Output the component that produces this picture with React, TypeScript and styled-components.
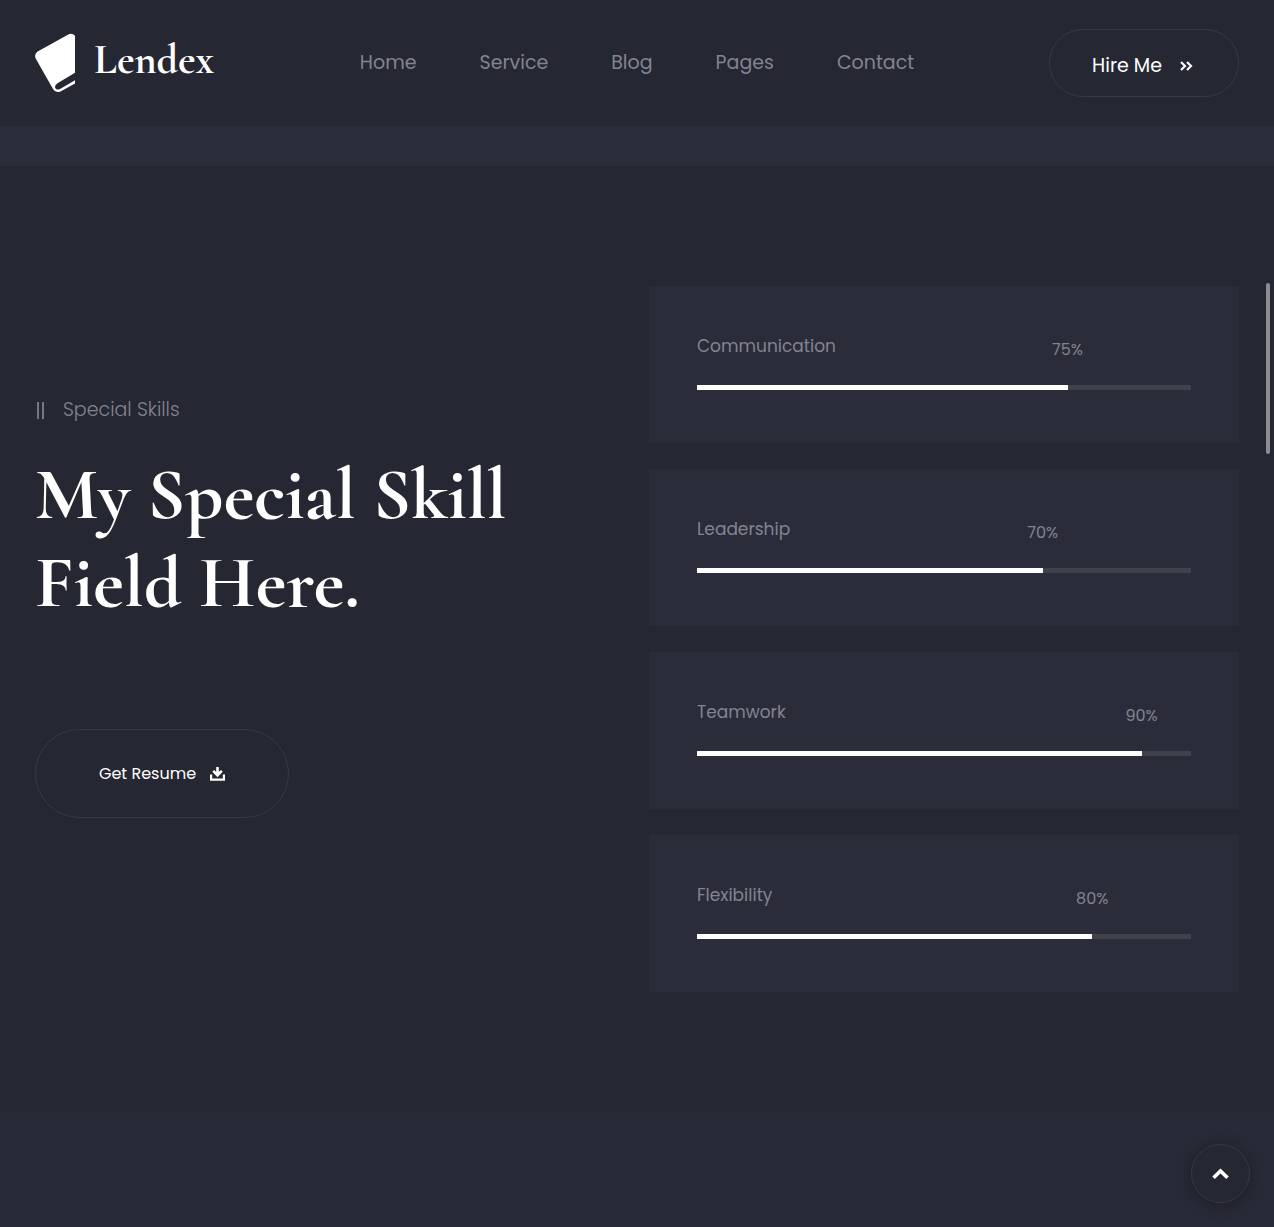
import React from "react";
import styled, { createGlobalStyle } from "styled-components";

const color = {
  page: "#252733",
  panel: "#2a2c39",
  strip: "#282a37",
  track: "#3f414d",
  line: "#373945",
  muted: "#838491",
  mark: "#767784",
  white: "#ffffff",
};

const sans = `Poppins, Inter, "Open Sans", sans-serif`;
const serif = `"Cormorant Garamond", "Liberation Serif", serif`;

const GlobalStyle = createGlobalStyle`
  *, *::before, *::after { box-sizing: border-box; }
  body {
    margin: 0;
    background: ${color.strip};
    color: ${color.muted};
    font-family: ${sans};
    font-weight: 400;
  }
  h1, h2, p, ul { margin: 0; padding: 0; }
  a { color: inherit; text-decoration: none; }
`;

const Header = styled.header`
  display: grid;
  grid-template-columns: 1fr auto 1fr;
  align-items: center;
  padding: 29px 35px;
  background: ${color.page};
`;

const Brand = styled.a`
  display: flex;
  align-items: center;
  gap: 19px;
  font-family: ${serif};
  font-size: 42px;
  line-height: 48px;
  font-weight: 700;
  color: ${color.white};
`;

const BrandName = styled.span`
  padding-bottom: 6px;
`;

const NavList = styled.ul`
  display: flex;
  gap: 63px;
  list-style: none;
  font-size: 19px;
  line-height: 28px;
`;

const PillButton = styled.button<{ $large?: boolean }>`
  display: inline-flex;
  align-items: center;
  justify-content: center;
  gap: ${(p) => (p.$large ? 14 : 18)}px;
  padding: ${(p) => (p.$large ? "32px 63px" : "23px 45px 17px 42px")};
  border: 1px solid ${color.line};
  border-radius: 45px;
  background: transparent;
  color: ${color.white};
  font-family: inherit;
  font-weight: 400;
  font-size: ${(p) => (p.$large ? 16 : 19)}px;
  line-height: ${(p) => (p.$large ? 23 : 26)}px;
  cursor: pointer;
`;

const HeaderAction = styled.div`
  display: flex;
  justify-content: flex-end;
`;

const Band = styled.div`
  height: 40px;
  background: ${color.panel};
`;

const Section = styled.section`
  display: grid;
  grid-template-columns: 1fr 1fr;
  gap: 24px;
  align-items: center;
  padding: 120px 35px;
  background: ${color.page};
`;

const Intro = styled.div`
  padding-bottom: 64px;
`;

const Eyebrow = styled.p`
  display: flex;
  align-items: center;
  gap: 19px;
  padding-left: 2px;
  font-size: 19px;
  line-height: 28px;
  font-weight: 300;
`;

const Bars = styled.span`
  width: 7px;
  height: 17px;
  border: solid ${color.mark};
  border-width: 0 2px;
`;

const Title = styled.h2`
  margin: 27px 0 102px;
  font-family: ${serif};
  font-size: 74px;
  line-height: 88px;
  font-weight: 700;
  color: ${color.white};
`;

const SkillList = styled.ul`
  display: grid;
  gap: 26px;
  list-style: none;
`;

const SkillCard = styled.li`
  padding: 48px 48px 53px;
  background: ${color.panel};
`;

const SkillName = styled.p`
  margin-bottom: 27px;
  font-size: 17px;
  line-height: 24px;
`;

const Track = styled.div`
  position: relative;
  height: 5px;
  background: ${color.track};
`;

const Fill = styled.div`
  height: 100%;
  background: ${color.white};
`;

const Percent = styled.span`
  position: absolute;
  bottom: 28px;
  transform: translateX(-50%);
  font-size: 16px;
  line-height: 24px;
`;

const Tail = styled.footer`
  min-height: 115px;
  background: ${color.strip};
`;

const ToTop = styled.button`
  position: fixed;
  right: 24px;
  bottom: 24px;
  display: grid;
  place-items: center;
  width: 59px;
  height: 59px;
  padding: 0;
  border: 1px solid ${color.line};
  border-radius: 50%;
  background: ${color.page};
  box-shadow: 0 2px 14px rgba(24, 22, 32, 0.6);
  color: ${color.white};
  cursor: pointer;
`;

const ScrollThumb = styled.div`
  position: fixed;
  top: 283px;
  right: 4px;
  width: 4px;
  height: 171px;
  border-radius: 2px;
  background: #8c8d91;
`;

const links = ["Home", "Service", "Blog", "Pages", "Contact"];

const skills = [
  { name: "Communication", value: 75 },
  { name: "Leadership", value: 70 },
  { name: "Teamwork", value: 90 },
  { name: "Flexibility", value: 80 },
];

const LogoMark = () => (
  <svg width="40" height="60" viewBox="0 0 40 60" aria-hidden="true">
    <path
      fill="#fff"
      d="M2.700 18.500 33.300 1.500Q37-.3 40 2.800V39.700L22.500 50.200Q19.300 52.500 20.300 55Q21.700 57.600 25 56L40 47.300V50.500L25.500 58.500Q20.500 60.500 18 56L.7 25.500Q-1.200 21 2.700 18.500Z"
    />
  </svg>
);

const DoubleChevron = () => (
  <svg width="13" height="10" viewBox="0 0 13 10" fill="none" stroke="currentColor" strokeWidth="2.200" aria-hidden="true">
    <path d="M1 1 5 5 1 9M7 1 11 5 7 9" />
  </svg>
);

const DownloadIcon = () => (
  <svg width="15" height="14" viewBox="0 0 15 14" aria-hidden="true">
    <path fill="currentColor" d="M6.200 0H8.800V4.800L11 2.900 12.700 4.700 7.500 10.200 2.300 4.700 4 2.900 6.200 4.800Z" />
    <path fill="none" stroke="currentColor" strokeWidth="2.200" d="M1.100 7.500V12.700H13.900V7.500" />
  </svg>
);

const ChevronUp = () => (
  <svg width="17" height="12" viewBox="0 0 17 12" fill="none" stroke="currentColor" strokeWidth="3.600" aria-hidden="true">
    <path d="M1.500 9.800 8.500 3 15.500 9.800" />
  </svg>
);

export default function App() {
  return (
    <>
      <GlobalStyle />
      <Header>
        <Brand href="#">
          <LogoMark />
          <BrandName>Lendex</BrandName>
        </Brand>
        <nav aria-label="Main">
          <NavList>
            {links.map((link) => (
              <li key={link}>
                <a href={`#${link.toLowerCase()}`}>{link}</a>
              </li>
            ))}
          </NavList>
        </nav>
        <HeaderAction>
          <PillButton type="button">
            Hire Me <DoubleChevron />
          </PillButton>
        </HeaderAction>
      </Header>
      <main>
        <Band />
        <Section>
          <Intro>
            <Eyebrow>
              <Bars />
              Special Skills
            </Eyebrow>
            <Title>
              My Special Skill
              <br />
              Field Here.
            </Title>
            <PillButton type="button" $large>
              Get Resume <DownloadIcon />
            </PillButton>
          </Intro>
          <SkillList>
            {skills.map(({ name, value }) => (
              <SkillCard key={name}>
                <SkillName>{name}</SkillName>
                <Track role="progressbar" aria-label={name} aria-valuenow={value} aria-valuemin={0} aria-valuemax={100}>
                  <Fill style={{ width: `${value}%` }} />
                  <Percent style={{ left: `${value}%` }}>{value}%</Percent>
                </Track>
              </SkillCard>
            ))}
          </SkillList>
        </Section>
      </main>
      <Tail />
      <ScrollThumb />
      <ToTop type="button" aria-label="Back to top">
        <ChevronUp />
      </ToTop>
    </>
  );
}
